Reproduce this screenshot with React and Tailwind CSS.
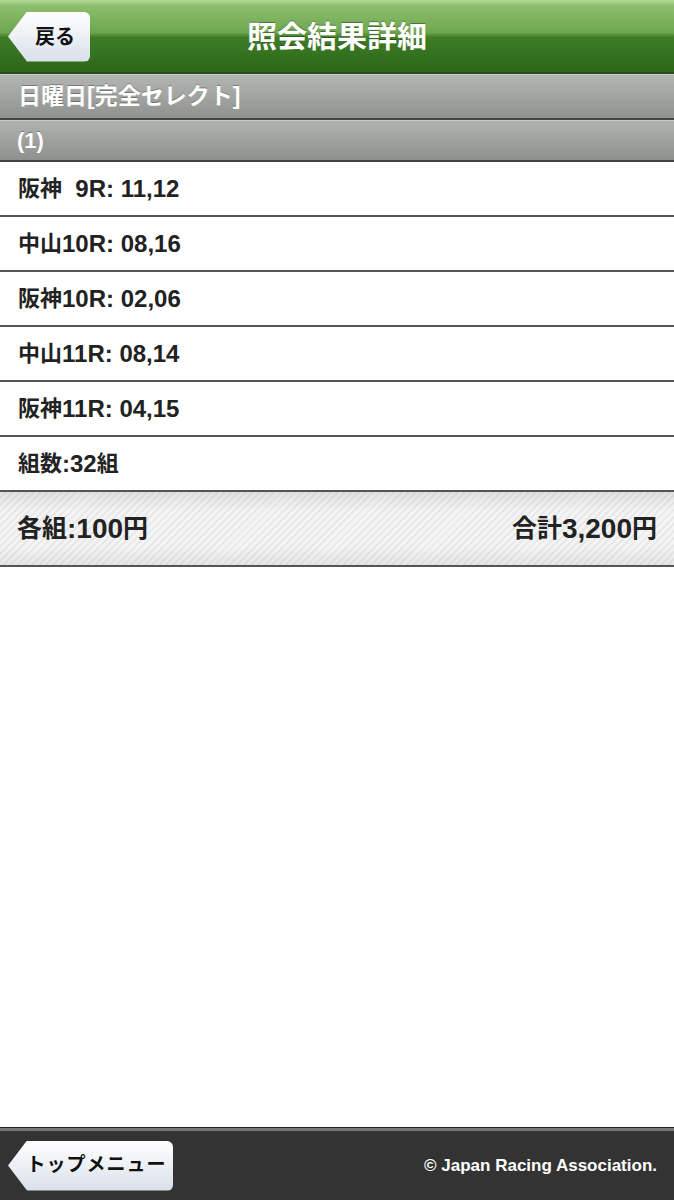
// 照会結果詳細
import React from "react";

const font = "font-['Liberation_Sans','Noto_Sans_CJK_JP',sans-serif]";

const races = [
    { name: "阪神", race: "\u00a0\u00a09R", nums: "11,12" },
    { name: "中山", race: "10R", nums: "08,16" },
    { name: "阪神", race: "10R", nums: "02,06" },
    { name: "中山", race: "11R", nums: "08,14" },
    { name: "阪神", race: "11R", nums: "04,15" },
];

const BackButton = ({ label, className }) => (
    <button
        type="button"
        className={`relative flex items-center justify-center whitespace-nowrap pl-[12px] rounded-[6px] bg-[linear-gradient(to_bottom,#ffffff_0%,#eef1f6_45%,#d9e0ea_100%)] text-[#111] font-bold [clip-path:polygon(19px_0,100%_0,100%_100%,19px_100%,0_50%)] ${className}`}
    >
        {label}
    </button>
);

const App = () => {
    return (
        <div className={`min-h-screen flex flex-col bg-white ${font}`}>
            {/* Header */}
            <div className="h-[74px] flex items-center relative border-b-2 border-[#2a4a1c] bg-[linear-gradient(to_bottom,#b5d99b_0%,#8cbf6d_8%,#6ea64f_45%,#3f7c27_52%,#33701d_80%,#2d6619_100%)]">
                <div className="pl-2 pt-[1px]">
                    <BackButton label="戻る" className="w-[82px] h-[50px] text-[20px]" />
                </div>
                <h1 className="absolute left-0 right-0 text-center text-white font-bold text-[30px] pointer-events-none [text-shadow:0_-1px_0_rgba(0,0,0,0.35)]">
                    照会結果詳細
                </h1>
            </div>

            {/* Section headers */}
            <div className="h-[46px] flex items-center px-[18px] border-b-2 border-[#444] bg-[linear-gradient(to_bottom,#b4b6b3_0%,#a2a4a1_50%,#8f928f_100%)] shadow-[inset_0_1px_0_#c9cbc8]">
                <span className="text-white font-bold text-[23px] [text-shadow:0_-1px_0_rgba(0,0,0,0.3)]">日曜日[完全セレクト]</span>
            </div>
            <div className="h-[42px] flex items-center px-[17px] border-b-2 border-[#444] bg-[linear-gradient(to_bottom,#b1b3b0_0%,#a0a29f_50%,#8e918e_100%)] shadow-[inset_0_1px_0_#c9cbc8]">
                <span className="text-white font-bold text-[22px] [text-shadow:0_-1px_0_rgba(0,0,0,0.3)]">(1)</span>
            </div>

            {/* Race rows */}
            {races.map((r, i) => (
                <div key={i} className="h-[55px] flex items-center px-[18px] border-b-2 border-[#555] text-[#222] font-bold text-[24px] whitespace-pre">
                    <span className="text-[22px]">{r.name}</span>
                    <span>{r.race}: {r.nums}</span>
                </div>
            ))}
            <div className="h-[55px] flex items-center px-[18px] border-b-2 border-[#555] text-[#222] font-bold text-[24px]">
                <span className="text-[22px]">組数</span>
                <span>:32</span>
                <span className="text-[22px]">組</span>
            </div>

            {/* Total */}
            <div className="h-[75px] relative flex items-center justify-between px-[17px] border-b-2 border-[#555] bg-[repeating-linear-gradient(135deg,#f4f4f4_0px,#f4f4f4_3px,#e8e8e8_3px,#e8e8e8_5px)] text-[#222] font-bold text-[28px]">
                <div className="absolute inset-0 bg-[linear-gradient(to_bottom,rgba(0,0,0,0.08)_0%,rgba(255,255,255,0)_25%,rgba(255,255,255,0)_75%,rgba(0,0,0,0.06)_100%)]"></div>
                <div className="relative flex items-center">
                    <span className="text-[25px]">各組</span>
                    <span>:100</span>
                    <span className="text-[25px]">円</span>
                </div>
                <div className="relative flex items-center">
                    <span className="text-[25px]">合計</span>
                    <span>3,200</span>
                    <span className="text-[25px]">円</span>
                </div>
            </div>

            <div className="flex-1"></div>

            {/* Footer */}
            <div className="h-[72px] flex items-center justify-between pl-2 pr-[17px] bg-[#333] border-t-[3px] border-[#777] shadow-[0_-1px_0_#222]">
                <BackButton label="トップメニュー" className="w-[165px] h-[50px] text-[19px] tracking-[1px]" />
                <span className="text-white font-bold text-[17px]">© Japan Racing Association.</span>
            </div>
        </div>
    );
};

export default App;
